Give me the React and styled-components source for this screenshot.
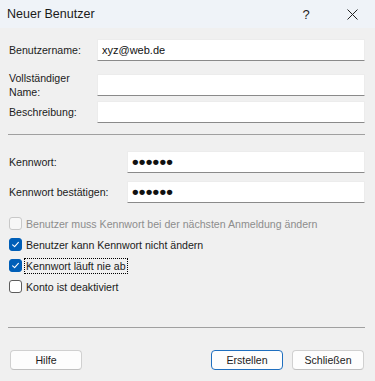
import React from 'react';
import styled, { createGlobalStyle } from 'styled-components';

const Global = createGlobalStyle`
  body {
    margin: 0;
    background: #f0f0f0;
    font-family: "Liberation Sans", Arial, sans-serif;
  }
`;

const Dialog = styled.div`
  width: 375px;
  height: 381px;
  background: #f0f0f0;
  display: flex;
  flex-direction: column;
  color: #1b1b1b;
  font-size: 10.6px;
  overflow: hidden;
`;

const TitleBar = styled.div`
  height: 28px;
  flex: none;
  display: flex;
  align-items: center;
  padding-left: 7px;
  background: #eff3f8;
`;

const Title = styled.div`
  flex: 1;
  font-size: 12.5px;
  color: #1a1a1a;
`;

const TitleButton = styled.div`
  width: 46px;
  height: 28px;
  display: flex;
  align-items: center;
  justify-content: center;
  font-size: 13px;
  color: #222;
`;

const Body = styled.div`
  flex: 1;
  display: flex;
  flex-direction: column;
  padding: 0 10px 0 9px;
`;

const FieldRow = styled.div`
  display: grid;
  grid-template-columns: ${(p) => p.$label}px 1fr;
  align-items: center;
  height: 22px;
  margin-top: ${(p) => p.$top}px;
`;

const Label = styled.div`
  line-height: 14px;
`;

const Input = styled.div`
  height: 22px;
  box-sizing: border-box;
  background: #fff;
  border: 1px solid #ececec;
  border-bottom-color: #8a8a8a;
  border-radius: 1px;
  display: flex;
  align-items: center;
  padding-left: 4px;
  font-size: 11px;
  color: #111;
`;

const Dots = styled.span`
  font-size: 19px;
  line-height: 1;
  font-weight: bold;
  letter-spacing: 0.2px;
  margin-top: -1px;
`;

const Separator = styled.div`
  height: 1px;
  flex: none;
  background: #a0a0a0;
  margin: ${(p) => p.$top}px 0 0 -1px;
`;

const Checks = styled.div`
  display: flex;
  flex-direction: column;
  margin-top: 10px;
`;

const CheckRow = styled.div`
  height: 21px;
  display: flex;
  align-items: center;
  gap: 3px;
  color: ${(p) => (p.$disabled ? '#8d8d8d' : '#1b1b1b')};
`;

const Box = styled.span`
  width: 13px;
  height: 13px;
  box-sizing: border-box;
  border-radius: 3px;
  flex: none;
  display: flex;
  align-items: center;
  justify-content: center;
  background: ${(p) => (p.$checked ? '#005fb8' : p.$disabled ? '#f7f7f7' : '#fff')};
  border: 1px solid ${(p) => (p.$checked ? '#005fb8' : p.$disabled ? '#c8c8c8' : '#5c5c5c')};
`;

const CheckText = styled.span`
  padding: 1px 1px;
  border: 1px dotted ${(p) => (p.$focus ? '#000' : 'transparent')};
  margin-left: -1px;
`;

const Spacer = styled.div`
  flex: 1;
`;

const Footer = styled.div`
  display: flex;
  align-items: center;
  padding: 22px 1px 11px 1px;
  gap: 9px;
`;

const Button = styled.button`
  width: 72px;
  height: 20px;
  box-sizing: border-box;
  background: #fdfdfd;
  border: 1px solid ${(p) => (p.$primary ? '#1f6fbf' : '#d0d0d0')};
  border-bottom-color: ${(p) => (p.$primary ? '#1f6fbf' : '#c0c0c0')};
  border-radius: 4px;
  font-family: "Liberation Sans", Arial, sans-serif;
  font-size: 10.6px;
  color: #1b1b1b;
  padding: 0;
`;

const Check = () => (
  <svg width="9" height="9" viewBox="0 0 9 9">
    <path d="M1.6 4.8 L3.6 6.6 L7.4 2.4" fill="none" stroke="#fff" strokeWidth="1.1" strokeLinecap="round" strokeLinejoin="round" />
  </svg>
);

const CloseIcon = () => (
  <svg width="11" height="11" viewBox="0 0 11 11">
    <path d="M0.5 0.5 L10.5 10.5 M10.5 0.5 L0.5 10.5" stroke="#222" strokeWidth="1" />
  </svg>
);

const options = [
  { text: 'Benutzer muss Kennwort bei der nächsten Anmeldung ändern', disabled: true },
  { text: 'Benutzer kann Kennwort nicht ändern', checked: true },
  { text: 'Kennwort läuft nie ab', checked: true, focus: true },
  { text: 'Konto ist deaktiviert' },
];

export default function App() {
  return (
    <>
      <Global />
      <Dialog>
        <TitleBar>
          <Title>Neuer Benutzer</Title>
          <TitleButton>?</TitleButton>
          <TitleButton>
            <CloseIcon />
          </TitleButton>
        </TitleBar>
        <Body>
          <FieldRow $label={88} $top={11}>
            <Label>Benutzername:</Label>
            <Input>xyz@web.de</Input>
          </FieldRow>
          <FieldRow $label={88} $top={10}>
            <Label>
              Vollständiger
              <br />
              Name:
            </Label>
            <Input />
          </FieldRow>
          <FieldRow $label={88} $top={8}>
            <Label>Beschreibung:</Label>
            <Input />
          </FieldRow>
          <Separator $top={11} />
          <FieldRow $label={118} $top={16}>
            <Label>Kennwort:</Label>
            <Input>
              <Dots>••••••</Dots>
            </Input>
          </FieldRow>
          <FieldRow $label={118} $top={8}>
            <Label>Kennwort bestätigen:</Label>
            <Input>
              <Dots>••••••</Dots>
            </Input>
          </FieldRow>
          <Checks>
            {options.map((o) => (
              <CheckRow key={o.text} $disabled={o.disabled}>
                <Box $checked={o.checked} $disabled={o.disabled}>
                  {o.checked && <Check />}
                </Box>
                <CheckText $focus={o.focus}>{o.text}</CheckText>
              </CheckRow>
            ))}
          </Checks>
          <Spacer />
          <Separator $top={0} />
          <Footer>
            <Button>Hilfe</Button>
            <Spacer />
            <Button $primary>Erstellen</Button>
            <Button>Schließen</Button>
          </Footer>
        </Body>
      </Dialog>
    </>
  );
}
